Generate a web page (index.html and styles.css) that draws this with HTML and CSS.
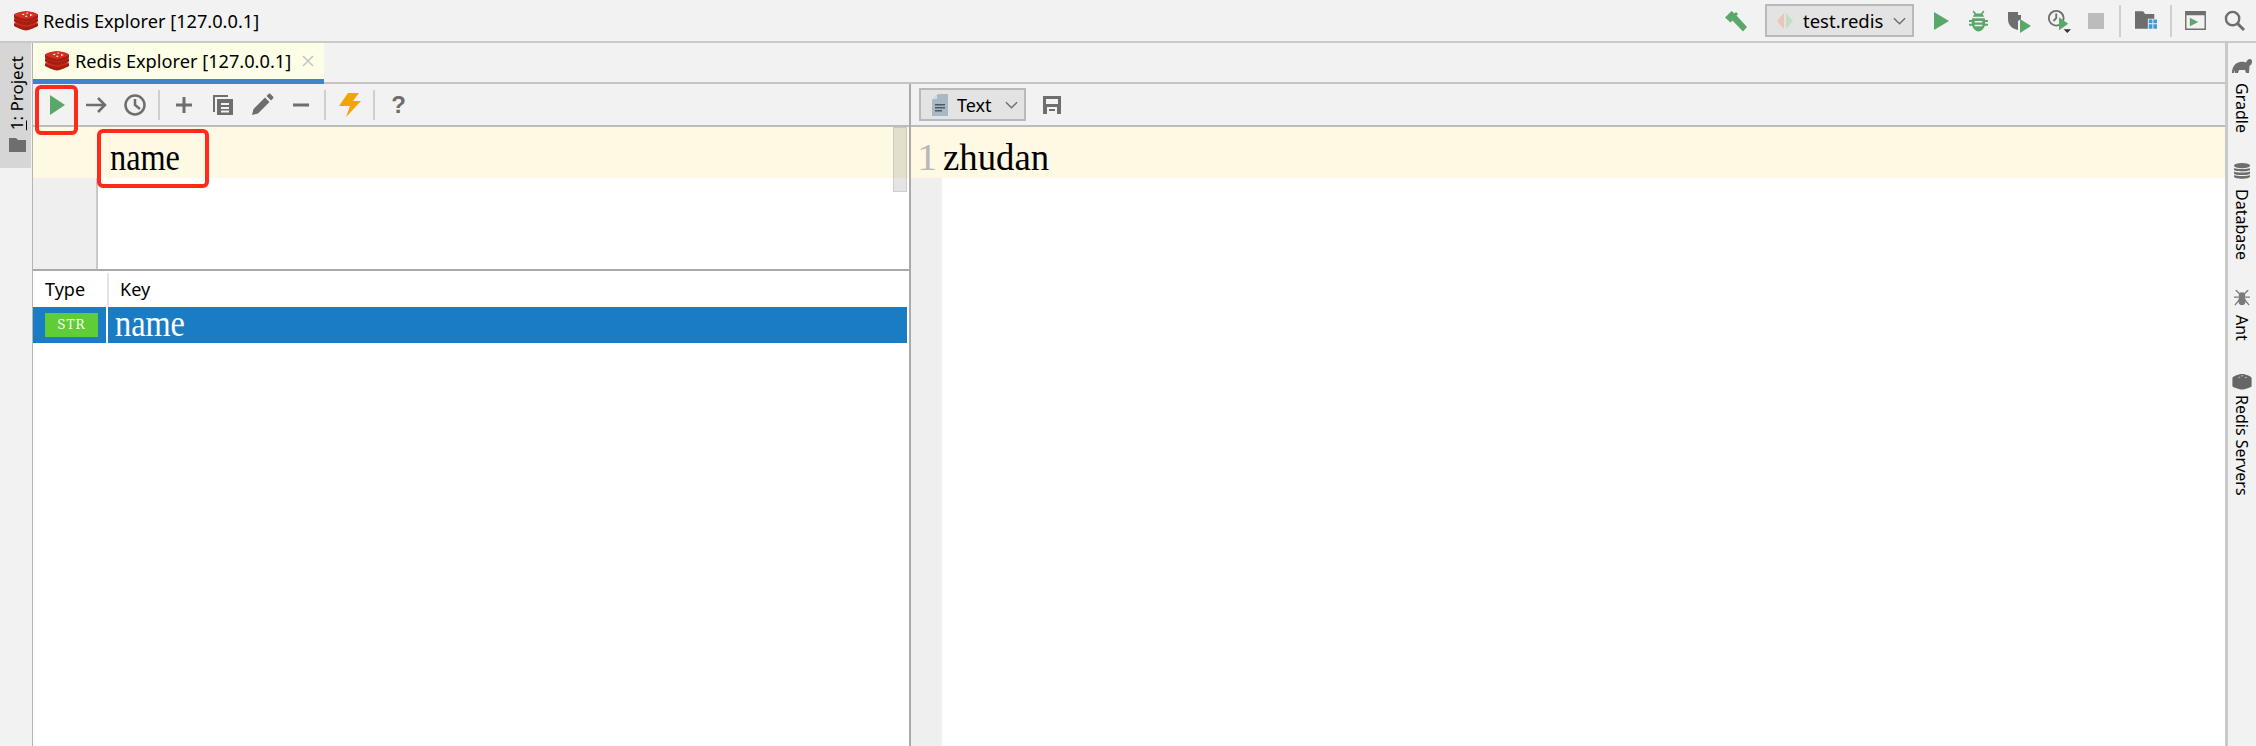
FILE: index.html
```html
<!DOCTYPE html>
<html lang="en">
<head>
<meta charset="utf-8">
<title>Redis Explorer [127.0.0.1]</title>
<link rel="stylesheet" href="styles.css">
</head>
<body>
<svg class="defs" width="0" height="0" aria-hidden="true">
  <symbol id="redis" viewBox="0 0 24 20">
    <path fill="#a41e11" d="M0 14.2v2.6c0 .4 1 1 5 2.6 3 1.2 5.6 2 7 2 1.300 0 3.800-.8 7-2 4-1.500 5-2.200 5-2.600v-2.600z" transform="translate(0 -2)"/>
    <path fill="#d82c20" d="M12 11.500 0 14.200c0 .4 1 1 5 2.400 3 1.100 5.600 1.700 7 1.700s4-.7 7-1.700c4-1.400 5-2 5-2.400z" transform="translate(0 -2.500)"/>
    <path fill="#a41e11" d="M0 8.500v2.800c0 .4 1 1 5 2.500 3 1.100 5.600 1.700 7 1.700s4-.6 7-1.700c4-1.500 5-2.100 5-2.500V8.500z" transform="translate(0 -1)"/>
    <path fill="#d82c20" d="M12 5 0 8.500c0 .4 1 1 5 2.500 3 1.100 5.600 1.700 7 1.700s4-.6 7-1.700c4-1.500 5-2.100 5-2.500z" transform="translate(0 -1.500)"/>
    <path fill="#a41e11" d="M0 3.800v2.700c0 .4 1 1 5 2.400 3 1.100 5.600 1.700 7 1.700s4-.6 7-1.700c4-1.400 5-2 5-2.400V3.800z"/>
    <path fill="#d82c20" d="M12 0C9 0 5 1 2.500 2 .8 2.700 0 3.300 0 3.800c0 .4 1 1 5 2.500 3 1.100 5.600 1.700 7 1.700s4-.6 7-1.700c4-1.500 5-2.100 5-2.500 0-.5-.8-1.100-2.500-1.800C19 1 15 0 12 0z"/>
    <path fill="#fff" d="M13 1.500l1.600.6-1.300.6-1.500-.6zM7.500 3.500l3-1-.6 1.800zM16 2.900l2.800 1-2.800 1zM12 4.600l1.600.7-1.200.6-1.600-.7z"/>
  </symbol>
  <symbol id="redisgray" viewBox="0 0 24 20">
    <path fill="#666" d="M0 5v10c0 .8 1 1.300 5 2.800 3 1.100 5.600 1.700 7 1.700s4-.6 7-1.700c4-1.500 5-2 5-2.800V5c0-1.500-7-5-12-5S0 3.500 0 5z"/>
    <path fill="#ccc" d="M12 1.500l2 .8-1.600.8-2-.8zM7 4l3-1-.6 2zM16 3.400l3 1-3 1z"/>
  </symbol>
</svg>

<header class="topbar">
  <div class="title">
    <svg class="logo"><use href="#redis"/></svg>
    <span class="ui-text">Redis Explorer [127.0.0.1]</span>
  </div>
  <div class="actions">
    <svg class="act act-hammer" viewBox="0 0 24 24"><path fill="#59a869" d="M1 8.500 7.500 2l3 2.500L12 3l2 2-1.500 1.500L23 18l-4 4.500L8.500 11.500l-2 2z"/></svg>
    <div class="combo combo-run">
      <svg class="combo-icon" viewBox="0 0 18 18"><path fill="#eec4b4" d="M8 1v16L1 9z"/><path fill="#c3dfc0" d="M10 1v16l7-8z"/></svg>
      <span class="ui-text run-name">test.redis</span>
      <svg class="chev" viewBox="0 0 14 8"><path fill="none" stroke="#6e6e6e" stroke-width="1.500" d="M1 1l6 6 6-6"/></svg>
    </div>
    <svg class="act act-play" viewBox="0 0 16 19"><path fill="#59a869" d="M0 0l16 9.500L0 19z"/></svg>
    <svg class="act act-bug" viewBox="0 0 20 22"><path fill="#59a869" d="M5 0l2.500 3h5L15 0l1.200 1-2 3.200c1 .8 1.600 1.500 1.800 2.300H4c.2-.8.800-1.500 1.800-2.300l-2-3.200zM3.500 8h13c.3.700.4 1 .5 2h3v2h-3v2h3v2h-3.300C15.500 19.500 13 22 10 22s-5.500-2.500-6.700-6H0v-2h3v-2H0v-2h3c.100-1 .2-1.300.5-2z"/><path fill="#f2f2f2" d="M6 11h8v1.500H6zM6 15h8v1.500H6z"/></svg>
    <svg class="act act-cov" viewBox="0 0 24 24"><path fill="#6e6e6e" d="M1 3h13v7l-3 2v9C6 20 1 17 1 10z"/><path fill="#f2f2f2" d="M11 3h3v3h-3z"/><path fill="#59a869" d="M13 10l11 7-11 7z"/></svg>
    <svg class="act act-prof" viewBox="0 0 26 26"><circle cx="10" cy="10" r="8" fill="none" stroke="#6e6e6e" stroke-width="2"/><path fill="none" stroke="#6e6e6e" stroke-width="2" d="M10 5v5l-3 3"/><path fill="#59a869" d="M13 9l10 7-10 7z"/><path fill="#333" d="M18 22h8l-4 4z"/></svg>
    <span class="act-stop"></span>
    <span class="sep sep-top"></span>
    <svg class="act act-folder" viewBox="0 0 24 22"><path fill="#6e6e6e" d="M0 1h9l2 3h10v5h-7v11H0z"/><path fill="#3d9ad8" d="M15 10h4v4h-4zM20 10h4v4h-4zM15 15h4v5h-4zM20 15h4v5h-4z"/></svg>
    <span class="sep sep-top2"></span>
    <svg class="act act-term" viewBox="0 0 22 20"><path fill="#6e6e6e" d="M0 0h22v20H0zM1.500 4.500v14h19v-14z"/><path fill="#59a869" d="M5 7l9 4.500L5 16z"/></svg>
    <svg class="act act-search" viewBox="0 0 22 22"><circle cx="9" cy="9" r="7" fill="none" stroke="#6e6e6e" stroke-width="2.500"/><path stroke="#6e6e6e" stroke-width="3" d="M14 14l7 7"/></svg>
  </div>
</header>

<div class="shell">
  <aside class="strip strip-left">
    <div class="project">
      <span class="vtext vtext-flip"><u>1</u>: Project</span>
      <svg class="project-folder" viewBox="0 0 17 14"><path fill="#6e6e6e" d="M0 0h7l2 2h8v12H0z"/></svg>
    </div>
  </aside>

  <main class="workspace">
    <div class="tabbar">
      <div class="tab">
        <svg class="logo"><use href="#redis"/></svg>
        <span class="ui-text">Redis Explorer [127.0.0.1]</span>
        <svg class="close" viewBox="0 0 12 12"><path stroke="#c4c4c4" stroke-width="1.500" d="M1 1l10 10M11 1L1 11"/></svg>
      </div>
    </div>

    <div class="panels">
      <section class="panel-left">
        <div class="toolbar">
          <span class="btn"><svg viewBox="0 0 24 24"><path fill="#59a869" d="M5 2l15 10L5 22z"/></svg></span>
          <span class="btn"><svg viewBox="0 0 24 24"><path fill="none" stroke="#6e6e6e" stroke-width="2.500" d="M2 12h19M14 5l7 7-7 7"/></svg></span>
          <span class="btn"><svg viewBox="0 0 24 24"><circle cx="12" cy="12" r="9.500" fill="none" stroke="#6e6e6e" stroke-width="2.500"/><path fill="none" stroke="#6e6e6e" stroke-width="2.500" d="M12 6v6l5 4"/></svg></span>
          <span class="tool-sep"></span>
          <span class="btn"><svg viewBox="0 0 24 24"><path stroke="#6e6e6e" stroke-width="3" d="M12 4v16M4 12h16"/></svg></span>
          <span class="btn"><svg viewBox="0 0 24 24"><path fill="#6e6e6e" d="M2 2h15v2H4v15H2z"/><path fill="#6e6e6e" fill-rule="evenodd" d="M6 6h16v16H6zM10 10v2h8v-2zM10 14v2h8v-2zM10 17.500v2h8v-2z"/></svg></span>
          <span class="btn"><svg viewBox="0 0 24 24"><path fill="#6e6e6e" d="M2 22l1.500-6L15 4.500l4.500 4.500L8 20.500zM16.500 3l2-2c.6-.6 1.400-.6 2 0l2.500 2.500c.6.600.6 1.400 0 2l-2 2z"/></svg></span>
          <span class="btn"><svg viewBox="0 0 24 24"><path stroke="#6e6e6e" stroke-width="3" d="M4 12h16"/></svg></span>
          <span class="tool-sep"></span>
          <span class="btn"><svg viewBox="0 0 24 24"><path fill="#f2a500" d="M10 0h11l-6 8h8L8 24l4-11H1z"/></svg></span>
          <span class="tool-sep"></span>
          <span class="btn help">?</span>
        </div>

        <div class="editor">
          <div class="caret-row"><span class="serif serif-name">name</span></div>
          <div class="editor-body"><div class="gutter gutter-left"></div></div>
          <div class="scrollthumb"></div>
        </div>

        <div class="results">
          <div class="thead">
            <span class="th th-type ui-small">Type</span>
            <span class="th th-key ui-small">Key</span>
          </div>
          <div class="trow">
            <span class="td-type"><span class="badge">STR</span></span>
            <span class="td-key serif serif-name">name</span>
          </div>
        </div>
      </section>

      <section class="panel-right">
        <div class="toolbar toolbar-right">
          <div class="combo combo-text">
            <svg class="doc" viewBox="0 0 16 22"><path fill="#a9b8c2" d="M6 0h10v22H0V6z"/><path fill="#dcdcdc" d="M5 1v4H1z"/><path fill="#4b5a63" d="M3 10h10v1.500H3zM3 13h10v1.500H3zM3 16h7v1.500H3z"/></svg>
            <span class="ui-small">Text</span>
            <svg class="chev" viewBox="0 0 14 8"><path fill="none" stroke="#6e6e6e" stroke-width="1.500" d="M1 1l6 6 6-6"/></svg>
          </div>
          <svg class="save" viewBox="0 0 18 18"><path fill="#6e6e6e" fill-rule="evenodd" d="M0 0h18v18H0zM3 3v5h12V3zM4 11v7h10v-7z"/><path fill="#6e6e6e" d="M6 13h6v2H6z"/></svg>
        </div>
        <div class="value-row">
          <span class="serif line-no">1</span>
          <span class="serif serif-value">zhudan</span>
        </div>
        <div class="value-body"><div class="gutter gutter-right"></div></div>
      </section>
    </div>

    <div class="mark mark-run"></div>
    <div class="mark mark-key"></div>
  </main>

  <aside class="strip strip-right">
    <div class="tool tool-gradle">
      <svg class="tool-icon" viewBox="0 0 20 14"><path fill="#6e6e6e" d="M0 14C0 8 3 4 8 3c3-.5 5 .5 6 .5 1-2 2-3.500 4-3.500 1.500 0 2 1 2 3 0 2-1.500 3-2.500 4L17 14h-3l-1-3H7l-1 3H3l-.5-3L2 14z"/></svg>
      <span class="vtext">Gradle</span>
    </div>
    <div class="tool tool-db">
      <svg class="tool-icon" viewBox="0 0 20 18"><g fill="#6e6e6e"><ellipse cx="10" cy="3" rx="9" ry="3"/><path d="M1 5.500c2 1.500 16 1.500 18 0v2.500c-1 2-17 2-18 0zM1 9.500c2 1.500 16 1.500 18 0v2.500c-1 2-17 2-18 0zM1 13.500c2 1.500 16 1.500 18 0v2c-1 3-17 3-18 0z"/></g></svg>
      <span class="vtext">Database</span>
    </div>
    <div class="tool tool-ant">
      <svg class="tool-icon" viewBox="0 0 20 18"><g stroke="#7a7a7a" stroke-width="1.500" fill="none"><path d="M3 0l5 5M17 0l-5 5M1 8h18M2 17l5-6M18 17l-5-6"/></g><ellipse cx="10" cy="6" rx="3.500" ry="3.500" fill="#7a7a7a"/><ellipse cx="10" cy="12" rx="4" ry="5" fill="#7a7a7a"/></svg>
      <span class="vtext">Ant</span>
    </div>
    <div class="tool tool-redis">
      <svg class="tool-icon"><use href="#redisgray"/></svg>
      <span class="vtext">Redis Servers</span>
    </div>
  </aside>
</div>
</body>
</html>
```

FILE: styles.css
```css
* { box-sizing: border-box; }
html, body { height: 100%; }
body {
  margin: 0;
  height: 746px;
  overflow: hidden;
  display: flex;
  flex-direction: column;
  background: #fff;
  color: #000;
  font-family: "Noto Sans", "Open Sans", sans-serif;
}
.defs { position: absolute; }

.ui-text { font-size: 18.200px; line-height: 24px; white-space: nowrap; }
.run-name { font-size: 18.500px; }
.ui-small { font-size: 18px; line-height: 24px; }

/* top bar */
.topbar {
  flex: none;
  height: 43px;
  display: flex;
  align-items: center;
  justify-content: space-between;
  background: #f2f2f2;
  border-bottom: 2px solid #c9c9c9;
  padding-left: 14px;
}
.title { display: flex; align-items: center; gap: 5px; }
.logo { width: 24px; height: 20px; flex: none; }
.actions { display: flex; align-items: center; height: 41px; }
.act { display: block; flex: none; }
.act-hammer { width: 24px; height: 24px; margin-right: 17px; }
.combo {
  display: flex;
  align-items: center;
  background: #e3e3e3;
  border: 2px solid #b9b9b9;
}
.combo-run { width: 149px; height: 33px; padding-left: 9px; margin-right: 20px; }
.combo-icon { width: 18px; height: 18px; margin-right: 9px; flex: none; }
.chev { width: 13px; height: 8px; flex: none; margin-left: auto; margin-right: 6px; }
.act-play { width: 15px; height: 18px; margin-right: 20px; }
.act-bug { width: 19px; height: 22px; margin-right: 19px; }
.act-cov { width: 24px; height: 24px; margin-right: 16px; }
.act-prof { width: 24px; height: 24px; margin-right: 17px; }
.act-stop { width: 16px; height: 16px; background: #bcbcbc; flex: none; margin-right: 15px; }
.sep { width: 2px; height: 32px; background: #cfcfcf; flex: none; }
.sep-top { margin-right: 14px; }
.act-folder { width: 22px; height: 21px; margin-right: 13px; }
.sep-top2 { margin-right: 13px; }
.act-term { width: 21px; height: 19px; margin-right: 18px; }
.act-search { width: 21px; height: 21px; margin-right: 11px; }

/* shell */
.shell { flex: 1; min-height: 0; display: flex; }
.strip { flex: none; background: #f2f2f2; }
.strip-left { width: 33px; border-right: 1px solid #b4b4b4; }
.strip-right {
  width: 31px;
  border-left: 3px solid #c9c9c9;
  display: flex;
  flex-direction: column;
  align-items: center;
}
.project {
  height: 125px;
  width: 31px;
  background: #d6d6d6;
  display: flex;
  flex-direction: column;
  align-items: center;
  padding-top: 13px;
  gap: 8px;
}
.project-folder { width: 17px; height: 14px; flex: none; margin-left: 3px; }
.vtext {
  writing-mode: vertical-rl;
  font-size: 16px;
  line-height: 20px;
  white-space: nowrap;
}
.vtext-flip { font-size: 17px; margin-left: 2px; transform: rotate(180deg); }
.tool { display: flex; flex-direction: column; align-items: center; }
.tool-icon { width: 20px; height: 16px; flex: none; }
.tool-gradle { padding-top: 15px; gap: 9px; }
.tool-db { padding-top: 30px; gap: 10px; }
.tool-ant { padding-top: 30px; gap: 9px; }
.tool-redis { padding-top: 33px; gap: 5px; }

/* workspace */
.workspace { flex: 1; min-width: 0; display: flex; flex-direction: column; position: relative; }
.tabbar {
  flex: none;
  height: 41px;
  display: flex;
  background: #f2f2f2;
  border-bottom: 2px solid #c4c4c4;
}
.tab {
  width: 291px;
  height: 41px;
  background: #fdfee6;
  border-bottom: 5px solid #3f83c9;
  display: flex;
  align-items: center;
  padding-left: 12px;
  gap: 6px;
}
.close { width: 12px; height: 12px; margin-left: 5px; flex: none; }

.panels { flex: 1; min-height: 0; display: flex; }
.panel-left { width: 876px; flex: none; display: flex; flex-direction: column; }
.panel-right {
  flex: 1;
  min-width: 0;
  display: flex;
  flex-direction: column;
  border-left: 2px solid #aaa;
}

.toolbar {
  flex: none;
  height: 43px;
  background: #f2f2f2;
  border-bottom: 2px solid #bcbcbc;
  display: flex;
  align-items: center;
  padding-left: 4px;
}
.toolbar-right { padding-left: 8px; }
.btn {
  width: 39px;
  height: 24px;
  flex: none;
  display: flex;
  align-items: center;
  justify-content: center;
}
.btn svg { width: 24px; height: 24px; display: block; }
.help { color: #6e6e6e; font-size: 24px; font-weight: 700; font-family: "Liberation Sans", sans-serif; }
.tool-sep { width: 2px; height: 30px; background: #cfcfcf; flex: none; margin: 0 4px; }

.combo-text { width: 107px; height: 33px; padding-left: 11px; gap: 9px; }
.doc { width: 16px; height: 22px; flex: none; }
.save { width: 18px; height: 18px; flex: none; margin-left: 17px; }

.serif {
  font-family: "Liberation Serif", "DejaVu Serif", serif;
  font-size: 34px;
  line-height: 46px;
  display: inline-block;
  transform-origin: left center;
}
.serif-name { transform: scale(.95, 1.1); }
.serif-value { transform: scale(1.08, 1.1); }
.line-no { color: #b8b8b8; transform: scale(1.2, 1.1); width: 22px; padding-left: 5px; flex: none; }

.editor { flex: none; height: 142px; position: relative; display: flex; flex-direction: column; }
.caret-row {
  flex: none;
  height: 51px;
  background: #fef9e3 linear-gradient(#f6f0dc, #f6f0dc) 76px 0 / 1px 100% no-repeat;
  padding: 8px 0 0 77px;
  color: #000;
  white-space: nowrap;
}
.editor-body { flex: 1; display: flex; }
.gutter { background: #efefef; }
.gutter-left { width: 65px; border-right: 2px solid #c9c9c9; }
.scrollthumb {
  position: absolute;
  top: 0;
  right: 2px;
  width: 14px;
  height: 65px;
  background: rgba(120,120,120,.2);
  border: 1px solid rgba(120,120,120,.2);
}

.results { flex: 1; border-top: 2px solid #aaa; min-height: 0; }
.thead { height: 36px; display: flex; align-items: center; }
.th { display: flex; align-items: center; height: 32px; }
.th-type { width: 76px; padding-left: 12px; border-right: 2px solid #e4e4e4; }
.th-key { padding-left: 11px; }
.trow {
  height: 36px;
  width: 874px;
  background: #1a7cc4;
  color: #fff;
  display: flex;
  align-items: center;
}
.td-type {
  width: 75px;
  flex: none;
  height: 36px;
  padding-left: 12px;
  display: flex;
  align-items: center;
  border-right: 2px solid #fff;
}
.badge {
  width: 53px;
  height: 24px;
  background: #5fce36;
  color: #fff;
  display: flex;
  align-items: center;
  justify-content: center;
  font-family: "DejaVu Serif", serif;
  font-size: 12px;
  letter-spacing: 1px;
}
.td-key { margin: 0 0 2px 7px; line-height: 32px; }

.value-row {
  flex: none;
  height: 51px;
  background: #fef9e3;
  display: flex;
  align-items: flex-start;
  padding-top: 8px;
  white-space: nowrap;
  color: #000;
}
.serif-value { margin-left: 10px; }
.value-body { flex: 1; display: flex; }
.gutter-right { width: 31px; }

/* red annotation boxes drawn over the screenshot */
.mark { position: absolute; border: 4px solid #ff2a1a; border-radius: 6px; pointer-events: none; }
.mark-run { left: 2px; top: 42px; width: 43px; height: 50px; }
.mark-key { left: 64px; top: 86px; width: 112px; height: 59px; }
```
